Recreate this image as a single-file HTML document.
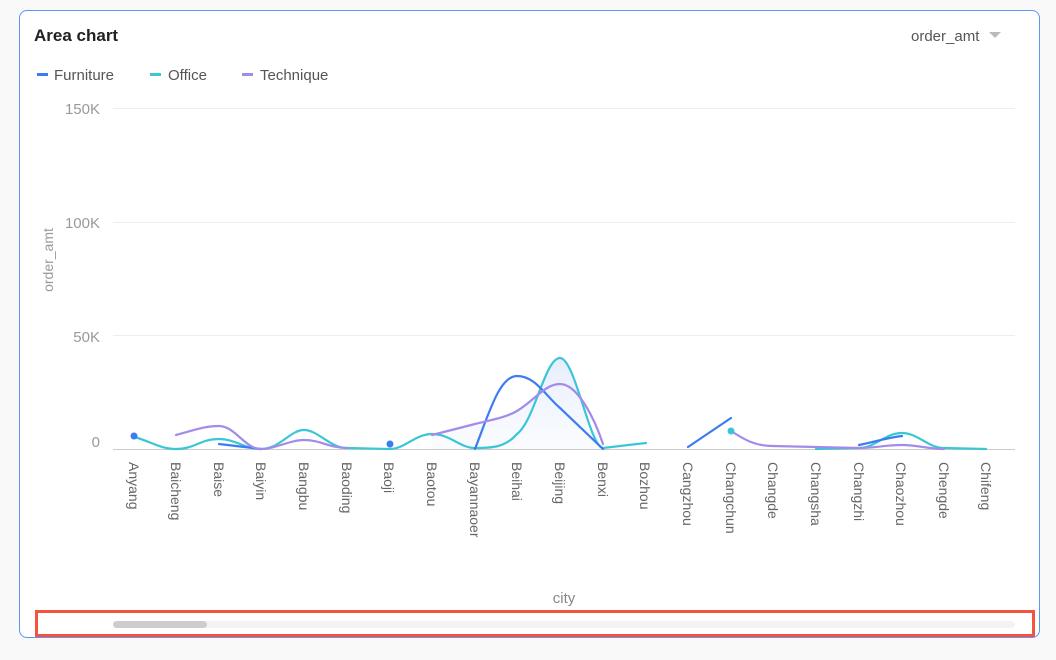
<!DOCTYPE html><html><head><meta charset="utf-8"><style>
body{margin:0;width:1056px;height:660px;background:#f9f9f9;font-family:"Liberation Sans",sans-serif;overflow:hidden}
.card{position:absolute;left:19px;top:10px;width:1019px;height:626px;border:1px solid #5b95f5;border-radius:8px;background:#fff}
</style></head><body>
<div class="card"></div>
<svg width="1056" height="660" style="position:absolute;left:0;top:0" font-family="Liberation Sans, sans-serif">
<defs><linearGradient id="g" x1="0" y1="0" x2="0" y2="1"><stop offset="0" stop-color="#dbe6fb" stop-opacity=".7"/><stop offset="1" stop-color="#eef3fd" stop-opacity=".3"/></linearGradient></defs>
<text x="34" y="41" font-size="17" font-weight="bold" fill="#222">Area chart</text>
<text x="911" y="41" font-size="15" fill="#555">order_amt</text>
<path d="M989 32h12l-6 6z" fill="#bbb"/>
<g font-size="15" fill="#555">
<rect x="37" y="73" width="11" height="3" fill="#3c7cf0"/><text x="54" y="80">Furniture</text>
<rect x="150" y="73" width="11" height="3" fill="#3ac6d6"/><text x="168" y="80">Office</text>
<rect x="242" y="73" width="11" height="3" fill="#a38bea"/><text x="260" y="80">Technique</text>
</g>
<g stroke="#eee" stroke-width="1"><line x1="113" y1="108.5" x2="1015" y2="108.5"/><line x1="113" y1="222.5" x2="1015" y2="222.5"/><line x1="113" y1="335.5" x2="1015" y2="335.5"/></g>
<line x1="113" y1="449.5" x2="1015" y2="449.5" stroke="#ccc"/>
<g font-size="15" fill="#999" text-anchor="end"><text x="100" y="114">150K</text><text x="100" y="228">100K</text><text x="100" y="342">50K</text><text x="100" y="447">0</text></g>
<text transform="translate(53,260) rotate(-90)" font-size="14" fill="#999" text-anchor="middle">order_amt</text>
<path d="M475 449C490 430 500 420 517 434C530 420 545 358 560 358C575 358 590 440 603 449ZM432 435L475 424L517 411L560 384L603 444L603 449L432 449Z" fill="url(#g)"/>
<g fill="none" stroke-width="2.2" stroke-linecap="round">
<path stroke="#3ac6d6" d="M134 437C150 441 160 449 176 449C195 449 200 439 219 439C235 439 245 449 261 449C280 449 290 430 304 430C318 430 330 448 347 448L390 449C405 449 415 434 432 434C450 434 460 448 475 448C490 448 505 448 517 434C535 420 545 358 560 358C575 358 590 448 603 448L646 443"/>
<path stroke="#3ac6d6" d="M816 449L859 448C875 448 885 433 902 433C918 433 928 448 944 448L986 449"/>
<path stroke="#3c7cf0" d="M219 444L261 449M475 449C490 410 500 376 517 376C535 376 545 395 560 408L603 449M688 447L731 418M859 445C875 442 885 438 902 436"/>
<path stroke="#a38bea" d="M176 435C195 430 205 426 219 426C235 426 245 449 261 449C275 449 290 440 304 440C320 440 330 448 347 448M432 435L475 424C490 420 505 418 517 411C535 400 545 384 560 384C578 384 595 420 603 444M731 431C745 440 755 446 773 446L816 447L859 448C875 448 885 445 902 445C918 445 928 449 944 449"/>
</g>
<circle cx="134" cy="436" r="3.5" fill="#3c7cf0"/><circle cx="390" cy="444" r="3.5" fill="#3c7cf0"/><circle cx="731" cy="431" r="3.5" fill="#3ac6d6"/>
<g font-size="14" fill="#666">
<text transform="translate(129,462) rotate(90)">Anyang</text>
<text transform="translate(171,462) rotate(90)">Baicheng</text>
<text transform="translate(214,462) rotate(90)">Baise</text>
<text transform="translate(256,462) rotate(90)">Baiyin</text>
<text transform="translate(299,462) rotate(90)">Bangbu</text>
<text transform="translate(342,462) rotate(90)">Baoding</text>
<text transform="translate(384,462) rotate(90)">Baoji</text>
<text transform="translate(427,462) rotate(90)">Baotou</text>
<text transform="translate(470,462) rotate(90)">Bayannaoer</text>
<text transform="translate(512,462) rotate(90)">Beihai</text>
<text transform="translate(555,462) rotate(90)">Beijing</text>
<text transform="translate(598,462) rotate(90)">Benxi</text>
<text transform="translate(640,462) rotate(90)">Bozhou</text>
<text transform="translate(683,462) rotate(90)">Cangzhou</text>
<text transform="translate(726,462) rotate(90)">Changchun</text>
<text transform="translate(768,462) rotate(90)">Changde</text>
<text transform="translate(811,462) rotate(90)">Changsha</text>
<text transform="translate(854,462) rotate(90)">Changzhi</text>
<text transform="translate(896,462) rotate(90)">Chaozhou</text>
<text transform="translate(939,462) rotate(90)">Chengde</text>
<text transform="translate(981,462) rotate(90)">Chifeng</text>
</g>
<text x="564" y="603" font-size="15" fill="#888" text-anchor="middle">city</text>
<rect x="113" y="621" width="902" height="7" rx="3.5" fill="#f3f3f3"/>
<rect x="113" y="621" width="94" height="7" rx="3.5" fill="#cdcdcd"/>
<rect x="36.5" y="611.5" width="997" height="24" fill="none" stroke="#f5533d" stroke-width="3"/>
</svg>
</body></html>
